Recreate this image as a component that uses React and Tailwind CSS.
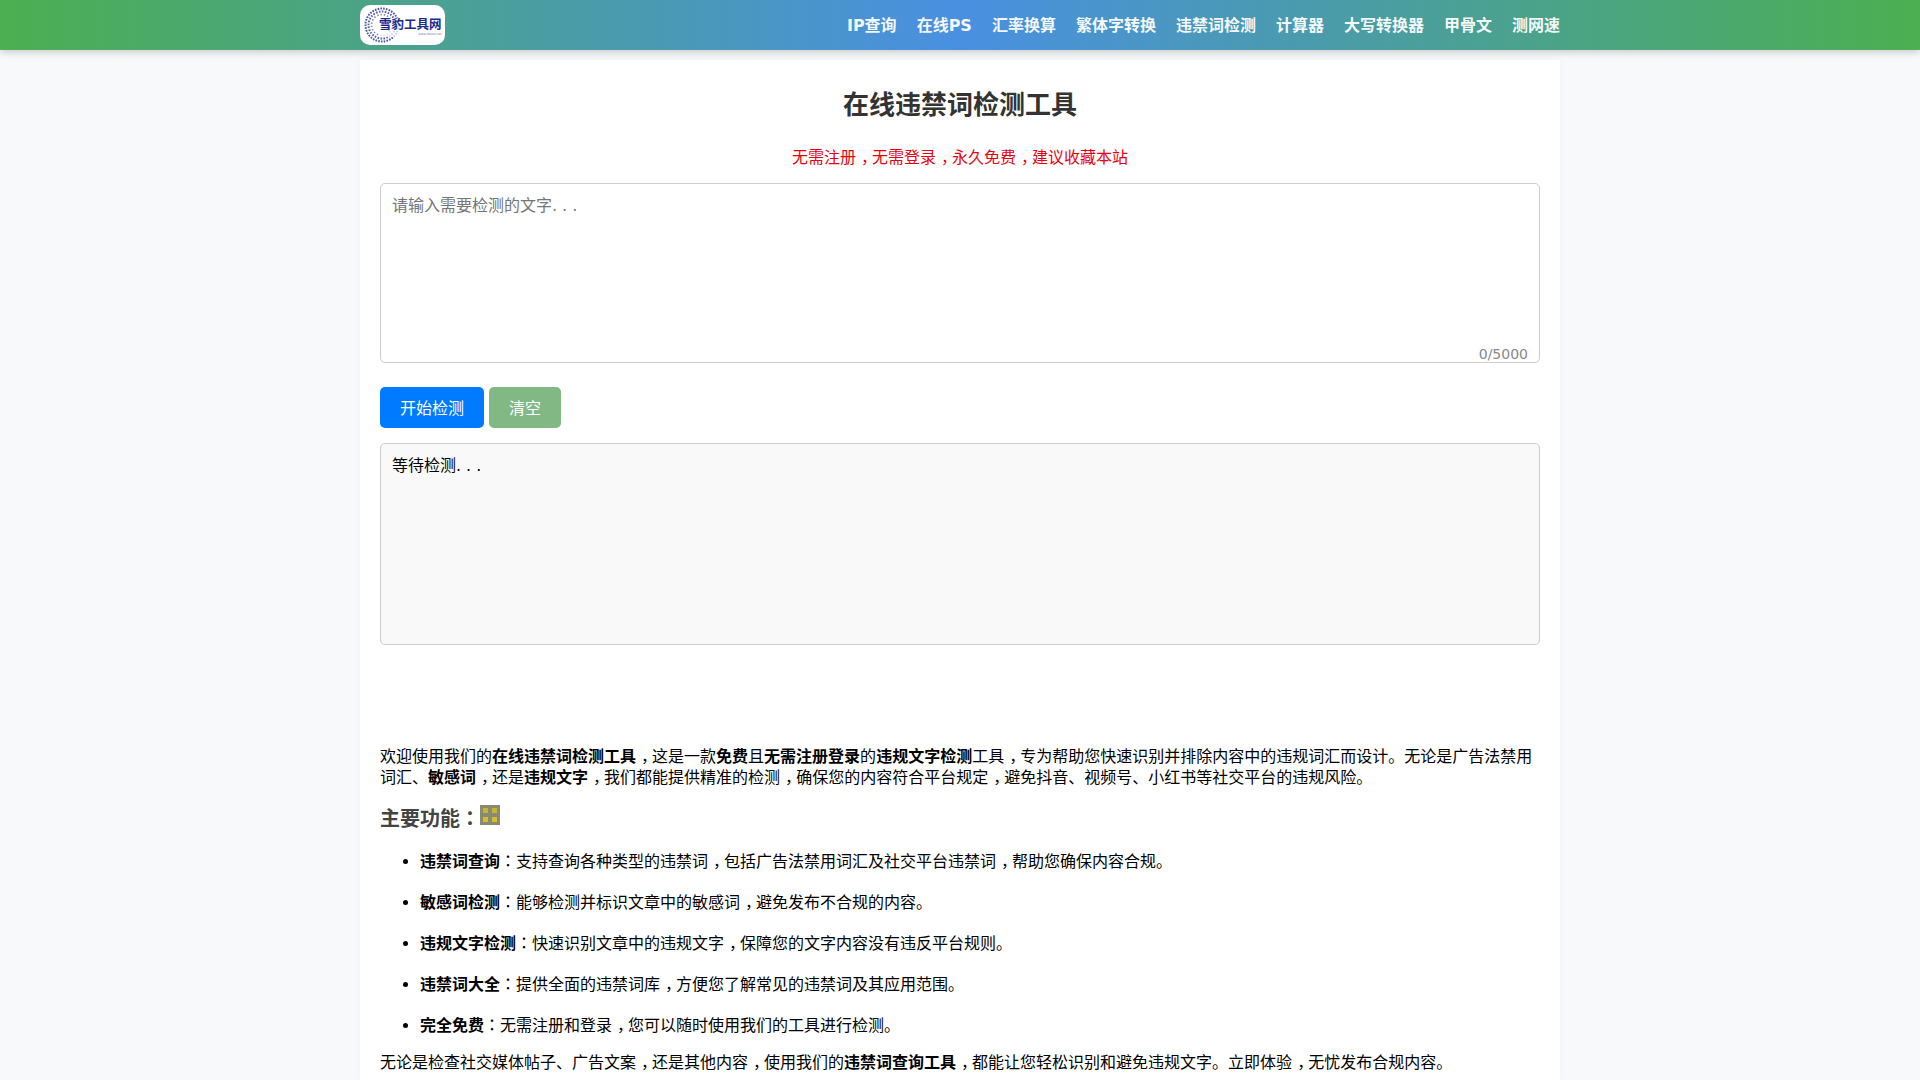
import React from "react";

const navLinks = ["IP查询", "在线PS", "汇率换算", "繁体字转换", "违禁词检测", "计算器", "大写转换器", "甲骨文", "测网速"];

const features = [
    ["违禁词查询", "：支持查询各种类型的违禁词，包括广告法禁用词汇及社交平台违禁词，帮助您确保内容合规。"],
    ["敏感词检测", "：能够检测并标识文章中的敏感词，避免发布不合规的内容。"],
    ["违规文字检测", "：快速识别文章中的违规文字，保障您的文字内容没有违反平台规则。"],
    ["违禁词大全", "：提供全面的违禁词库，方便您了解常见的违禁词及其应用范围。"],
    ["完全免费", "：无需注册和登录，您可以随时使用我们的工具进行检测。"],
];

// the comma and colon sit in the middle of their cell in the reference
const Cn = ({ children }) =>
    children.split(/([，：])/).map((part, i) => {
        if (part === "，") return <span key={i} className="pl-[5px] -mr-[5px]">{part}</span>;
        if (part === "：") return <span key={i} className="font-['Noto_Sans_CJK_TC'] leading-[0px]">{part}</span>;
        return part;
    });

const Logo = () => (
    <div className="relative h-10 w-[85px] overflow-hidden rounded-[10px] bg-white">
        <svg width="38" height="38" viewBox="0 0 38 38" className="absolute top-px left-[3px]">
            <circle cx="19" cy="19" r="16.5" fill="none" stroke="#2f3596" strokeWidth="2" strokeDasharray="1.6 1.2" opacity="0.85" />
            <circle cx="19" cy="19" r="13.5" fill="none" stroke="#2f3596" strokeWidth="2" strokeDasharray="1.6 1.4" opacity="0.8" />
            <circle cx="19" cy="19" r="10.5" fill="none" stroke="#2f3596" strokeWidth="1.6" strokeDasharray="1.4 2" opacity="0.6" />
        </svg>
        <div className="absolute top-[13px] left-[19px] flex flex-col items-end bg-white/70">
            <span className="text-[12.5px] leading-[14px] font-bold whitespace-nowrap text-[#1d2a8c]">雪豹工具网</span>
            <span className="text-[3px] leading-[5px] whitespace-nowrap text-[#6b6fa8]">www.xbtool.net</span>
        </div>
    </div>
);

const App = () => {
    return (
        <div className="h-[1080px] overflow-hidden bg-[#f8f9fa] text-base leading-[21px] text-black font-['DejaVu_Sans','Noto_Sans_CJK_SC',sans-serif]">
            <nav className="relative h-[50px] bg-[linear-gradient(90deg,#4caf50,#4a90e2,#4caf50)] shadow-[0_2px_8px_rgba(0,0,0,0.2)]">
                <div className="mx-auto flex h-full w-[1200px] items-center justify-between">
                    <Logo />
                    <div className="flex gap-5">
                        {navLinks.map((link) => (
                            <a key={link} className="font-bold text-white/95">{link}</a>
                        ))}
                    </div>
                </div>
            </nav>

            <main className="mx-auto mt-2.5 h-[1020px] w-[1200px] bg-white px-5 pt-[29px] shadow-[0_0_10px_rgba(0,0,0,0.03)]">
                <h1 className="text-center text-[26px] leading-[32px] font-bold text-[#333]">在线违禁词检测工具</h1>
                <p className="mt-[26px] mb-[15px] text-center text-red-600"><Cn>无需注册，无需登录，永久免费，建议收藏本站</Cn></p>

                <div className="relative h-[180px] rounded-[5px] border border-[#ccc] bg-white px-[11px] pt-[11px] text-[#757575]">
                    请输入需要检测的文字<span className="tracking-[5px]">...</span>
                    <span className="absolute right-[11px] -bottom-px text-sm leading-[18px] text-[#888]">0/5000</span>
                </div>

                <div className="mt-6 flex gap-[5px]">
                    <button className="h-[41px] w-[104px] rounded-[5px] bg-[#007bff] pt-px text-white">开始检测</button>
                    <button className="h-[41px] w-[72px] rounded-[5px] bg-[#82b883] pt-px text-white">清空</button>
                </div>

                <div className="mt-[15px] h-[202px] rounded-[5px] border border-[#ccc] bg-[#f9f9f9] px-[11px] pt-[11px]">
                    等待检测<span className="tracking-[5px]">...</span>
                </div>

                <div className="pt-[101px]">
                    <p>
                        欢迎使用我们的<strong>在线违禁词检测工具</strong><Cn>，这是一款</Cn><strong>免费</strong>且<strong>无需注册登录</strong>的<strong>违规文字检测</strong><Cn>工具，专为帮助您快速识别并排除内容中的违规词汇而设计。无论是广告法禁用词汇、</Cn><strong>敏感词</strong><Cn>，还是</Cn><strong>违规文字</strong><Cn>，我们都能提供精准的检测，确保您的内容符合平台规定，避免抖音、视频号、小红书等社交平台的违规风险。</Cn>
                    </p>
                    <h2 className="mt-[17px] flex items-start text-xl leading-[28px] font-bold text-[#444]">
                        <span>主要功能<Cn>：</Cn></span>
                        <svg width="20" height="20" viewBox="0 0 20 20">
                            <rect width="20" height="20" fill="#8a8a72" />
                            <rect x="3" y="3" width="5" height="5" fill="#c9b32f" />
                            <rect x="12" y="3" width="5" height="5" fill="#c9b32f" />
                            <rect x="3" y="12" width="5" height="5" fill="#d8bd2a" />
                            <rect x="12" y="12" width="5" height="5" fill="#d8bd2a" />
                        </svg>
                    </h2>
                    <ul className="mt-[18px] list-disc pl-10">
                        {features.map(([title, desc]) => (
                            <li key={title} className="mb-5">
                                <strong>{title}</strong><Cn>{desc}</Cn>
                            </li>
                        ))}
                    </ul>
                    <p className="-mt-[4px]">
                        <Cn>无论是检查社交媒体帖子、广告文案，还是其他内容，使用我们的</Cn><strong>违禁词查询工具</strong><Cn>，都能让您轻松识别和避免违规文字。立即体验，无忧发布合规内容。</Cn>
                    </p>
                </div>
            </main>
        </div>
    );
};

export default App;
